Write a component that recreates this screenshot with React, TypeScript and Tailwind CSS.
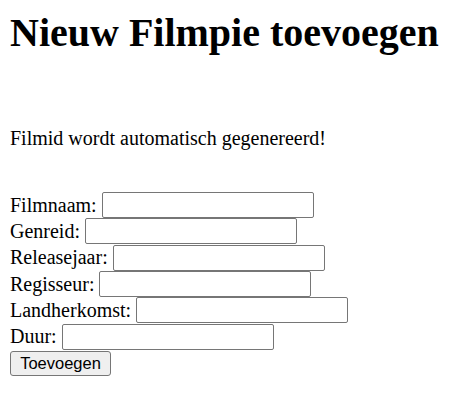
import React from 'react';

const fields = ['Filmnaam', 'Genreid', 'Releasejaar', 'Regisseur', 'Landherkomst', 'Duur'];

export default function App() {
  return (
    <div className="min-h-screen bg-white px-[10px] pt-[10px] text-black font-['Liberation_Serif',_'Times_New_Roman',_serif]">
      <h1 className="text-[40px] font-bold leading-[46px]">Nieuw Filmpie toevoegen</h1>

      <p className="mt-[71px] text-[20px] leading-[23px]">Filmid wordt automatisch gegenereerd!</p>

      <form className="mt-[42px] flex flex-col text-[20px]" onSubmit={(e) => e.preventDefault()}>
        {fields.map((name) => (
          <div key={name} className="flex h-[26.33px] items-center">
            <label className="leading-[23px]">{name}:</label>
            <input
              type="text"
              className="ml-[5px] h-[26px] w-[212px] rounded-[2px] border border-[#767676] bg-white px-[2px] text-[16.67px] outline-none"
            />
          </div>
        ))}
        <div className="mt-[1px] flex">
          <button
            type="submit"
            className="flex h-[25px] w-[101px] items-center justify-center rounded-[3px] border border-[#767676] bg-[#efefef] text-[16.5px] leading-[19px] text-black font-['Liberation_Sans',_Arial,_sans-serif]"
          >
            Toevoegen
          </button>
        </div>
      </form>
    </div>
  );
}
